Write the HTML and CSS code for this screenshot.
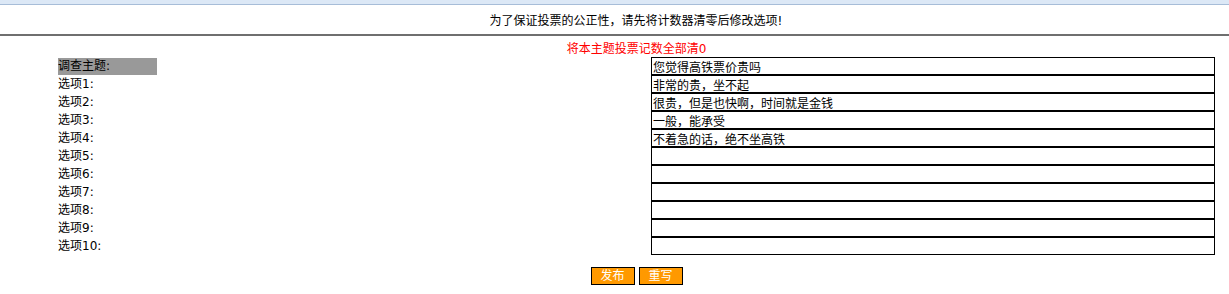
FILE: index.html
```html
<!DOCTYPE html>
<html lang="zh-CN">
<head>
    <meta charset="UTF-8">
    <title>修改投票主题</title>
    <link rel="stylesheet" href="styles.css">
</head>
<body>

<div class="topbar"></div>

<div class="notice">
    <div class="inner">为了保证投票的公正性，请先将计数器清零后修改选项!</div>
</div>

<form class="vote-form" onsubmit="return false">
    <div class="clear-link"><a href="#">将本主题投票记数全部清0</a></div>

    <div class="rows">
        <div class="label"><span class="subject">调查主题:</span></div>
        <div class="field"><input type="text" value="您觉得高铁票价贵吗"></div>

        <div class="label">选项1:</div>
        <div class="field"><input type="text" value="非常的贵，坐不起"></div>

        <div class="label">选项2:</div>
        <div class="field"><input type="text" value="很贵，但是也快啊，时间就是金钱"></div>

        <div class="label">选项3:</div>
        <div class="field"><input type="text" value="一般，能承受"></div>

        <div class="label">选项4:</div>
        <div class="field"><input type="text" value="不着急的话，绝不坐高铁"></div>

        <div class="label">选项5:</div>
        <div class="field"><input type="text" value=""></div>

        <div class="label">选项6:</div>
        <div class="field"><input type="text" value=""></div>

        <div class="label">选项7:</div>
        <div class="field"><input type="text" value=""></div>

        <div class="label">选项8:</div>
        <div class="field"><input type="text" value=""></div>

        <div class="label">选项9:</div>
        <div class="field"><input type="text" value=""></div>

        <div class="label">选项10:</div>
        <div class="field"><input type="text" value=""></div>
    </div>

    <div class="buttons">
        <input type="submit" class="btn" value="发布">
        <input type="reset" class="btn" value="重写">
    </div>
</form>

</body>
</html>
```

FILE: styles.css
```css
body {
    margin: 0;
    font-family: "DejaVu Sans", "Noto Sans CJK SC", sans-serif;
    font-size: 12px;
    color: #000;
    background-color: #fff;
}

.topbar {
    height: 4px;
    background-color: #dce8f6;
    border-bottom: 1px solid #a7bdd8;
}

.notice {
    padding: 7px 0 4px;
    border-bottom: 2px solid #6f6f6f;
}

.notice .inner {
    margin-left: 58px;
    width: 1156px;
    text-align: center;
    line-height: 18px;
}

.vote-form {
    margin-left: 58px;
    width: 1157px;
}

.clear-link {
    margin-top: 5px;
    line-height: 16px;
    text-align: center;
}

.clear-link a {
    color: #ff0000;
    text-decoration: none;
}

.rows {
    display: grid;
    grid-template-columns: 593px 564px;
    grid-auto-rows: 18px;
}

.label {
    line-height: 18px;
}

.subject {
    display: inline-block;
    width: 99px;
    height: 17px;
    line-height: 17px;
    background-color: #999999;
}

.field input {
    display: block;
    box-sizing: border-box;
    width: 100%;
    height: 18px;
    margin: 0;
    padding: 0 1px;
    border: 1px solid #000;
    font-family: inherit;
    font-size: 12px;
    line-height: 16px;
    color: #000;
    background-color: #fff;
    outline: none;
}

.buttons {
    margin-top: 12px;
    display: flex;
    justify-content: center;
    gap: 4px;
}

.btn {
    box-sizing: border-box;
    width: 44px;
    height: 18px;
    margin: 0;
    padding: 0;
    border: 1px solid #000;
    background-color: #ff9900;
    color: #fff;
    font-family: inherit;
    font-size: 12px;
    line-height: 16px;
    cursor: pointer;
}
```
